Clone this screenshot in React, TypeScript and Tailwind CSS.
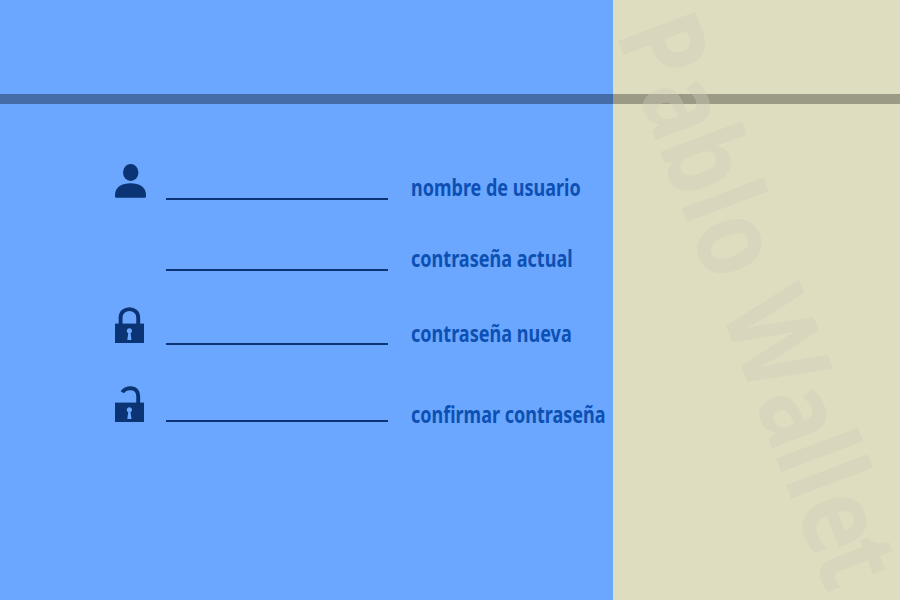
import React from "react";

function UserIcon() {
  return (
    <svg viewBox="0 0 31 34" className="h-[34px] w-[31px]" fill="#0a3474">
      <ellipse cx="15.7" cy="8.5" rx="7.7" ry="8.4" />
      <path d="M0 31C0 23 7 19.3 15.6 19.3S31 23 31 31v1.2q0 1.6-1.6 1.6H1.6Q0 33.8 0 32.2Z" />
    </svg>
  );
}

function LockIcon({ open = false }: { open?: boolean }) {
  return (
    <svg viewBox="0 0 29 36" className="h-[36px] w-[29px]" fill="none">
      <path
        d={open ? "M7.3 6.2C10.5 .8 23.2-.3 23.2 10.5V18" : "M5.6 18V10.5C5.6-.7 23.2-.7 23.2 10.5V18"}
        stroke="#0a3474"
        strokeWidth="3.9"
      />
      <path d="M0 16.6H29V36H0Z" fill="#0a3474" />
      <path d="M14.4 21.2a2.7 2.7 0 0 1 1.2 5.1l.9 6.6h-4.2l.9-6.6a2.7 2.7 0 0 1 1.2-5.1Z" fill="#6ba6ff" />
    </svg>
  );
}

type RowProps = {
  label: string;
  icon?: React.ReactNode;
  row: string;
  fit: string;
};

function Row({ label, icon, row, fit }: RowProps) {
  return (
    <div className={`flex items-end ${row}`}>
      <div className="flex h-full w-[51px] shrink-0 items-start">{icon}</div>
      <div className="h-[2px] w-[222px] shrink-0 bg-[#0a3474]" />
      <span
        className={`ml-[23px] origin-left text-[22.5px] leading-[24px] font-bold whitespace-nowrap text-[#0d50b3] ${fit}`}
      >
        {label}
      </span>
    </div>
  );
}

export default function App() {
  return (
    <div className="relative flex h-[600px] w-[900px] overflow-hidden bg-[#6ba6ff] font-['Noto_Sans',sans-serif]">
      <main className="w-[613px] shrink-0 pt-[94px]">
        <div className="h-[10px] bg-black/35" />
        <div className="pt-[60px] pl-[115px]">
          <Row label="nombre de usuario" icon={<UserIcon />} row="h-[36px]" fit="mb-0 scale-x-[0.8]" />
          <Row label="contraseña actual" row="mt-[35px] h-[36px]" fit="mb-0 scale-x-[0.802]" />
          <Row label="contraseña nueva" icon={<LockIcon />} row="mt-[36px] h-[38px]" fit="mb-[-1px] scale-x-[0.802]" />
          <Row label="confirmar contraseña" icon={<LockIcon open />} row="mt-[41px] h-[36px]" fit="mb-[-5px] scale-x-[0.8]" />
        </div>
      </main>
      <aside className="w-[287px] shrink-0 bg-[#deddbf] pt-[94px]">
        <div className="h-[10px] bg-black/30" />
      </aside>
      <svg viewBox="0 0 900 600" className="pointer-events-none absolute inset-0 h-full w-full overflow-visible">
        <text
          transform="translate(615.5 33.5) rotate(69.3) scale(0.83 1)"
          fontSize="115"
          fontWeight="700"
          fill="rgb(207 203 186 / 0.39)"
        >
          <tspan dx="0 5 -1 0 1">Pablo</tspan>
          <tspan dx="-5 5" fontSize="119"> W</tspan>
          <tspan dx="3 -3 0 3 -6">allet</tspan>
        </text>
      </svg>
    </div>
  );
}
